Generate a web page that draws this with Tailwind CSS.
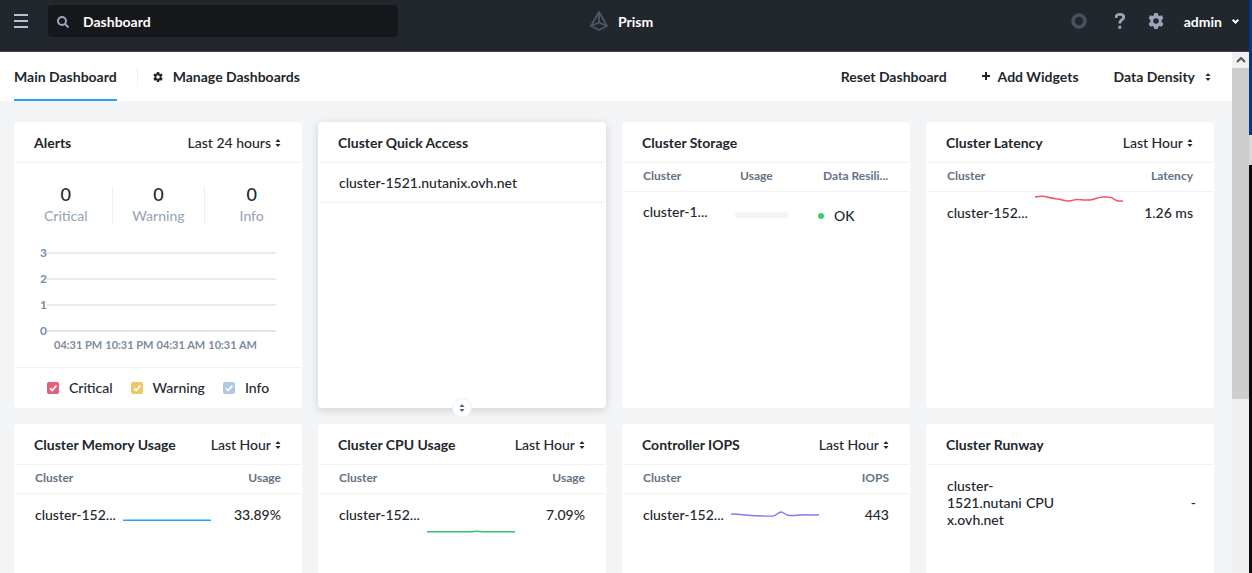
<!DOCTYPE html>
<html lang="en">
<head>
<meta charset="utf-8">
<title>Prism – Dashboard</title>
<script src="https://cdn.jsdelivr.net/npm/@tailwindcss/browser@4"></script>
</head>
<body class="flex h-screen overflow-hidden bg-[#f2f4f6] font-['Lato','Liberation_Sans',sans-serif] text-sm leading-5 font-medium text-[#22272e]">
<svg class="hidden">
  <symbol id="sort" viewBox="0 0 6 8"><path d="M3 0 5.500 3h-5zM3 8 .5 5h5z" fill="currentColor"/></symbol>
  <symbol id="tick" viewBox="0 0 12 12"><path d="m3 6.300 2.200 2.200L9.300 3.600" fill="none" stroke="#fff" stroke-width="1.800"/></symbol>
  <symbol id="gear" viewBox="0 0 16 16"><path fill="currentColor" fill-rule="evenodd" d="M6.200 0h3.600l.4 2.300 1.300.7 2.200-.8 1.800 3.100L13.700 6.800v2.400l1.800 1.500-1.800 3.100-2.200-.8-1.300.7L9.800 16H6.200l-.4-2.300-1.300-.7-2.200.8-1.800-3.100 1.800-1.500V6.800L.5 5.300l1.800-3.100 2.200.8 1.300-.7zM8 5.200a2.800 2.800 0 1 0 0 5.600 2.800 2.800 0 0 0 0-5.600z"/></symbol>
</svg>

<div class="flex min-w-0 flex-1 flex-col">
  <header class="flex h-[52px] shrink-0 items-center border-b border-[#3b4048] bg-[#22272e] pr-2.5 pb-2.5 pl-3.5">
    <div class="flex flex-1 items-center gap-5">
      <button aria-label="Menu" class="text-[#b8c0d0]"><svg class="block size-3.5" viewBox="0 0 14 14" fill="currentColor"><path d="M0 0h14v2H0zM0 6h14v2H0zM0 12h14v2H0z"/></svg></button>
      <label class="flex h-8 w-[350px] items-center gap-3.5 rounded bg-[#16181b] pt-0.5 pl-[9px] text-white">
        <svg class="size-3 shrink-0 text-[#9aa5b8]" viewBox="0 0 12 12" fill="none" stroke="currentColor" stroke-width="2"><circle cx="5" cy="5" r="4"/><path d="m8 8 3.500 3.500"/></svg>
        <input type="text" aria-label="Search" value="Dashboard" class="min-w-0 flex-1 bg-transparent font-bold outline-none">
      </label>
    </div>
    <a href="#" class="flex items-center gap-2.5 font-bold text-white">
      <svg class="h-5 w-[18px] text-[#4c5667]" viewBox="0 0 18 20" fill="none" stroke="currentColor" stroke-width="1.800" stroke-linejoin="round"><path d="M9 1 1 15l8 4 8-4zM9 1v10.500M1 15l8-3.500 8 3.500"/></svg>
      <span class="pt-0.5">Prism</span>
    </a>
    <div class="flex flex-1 items-center justify-end pl-2.5">
      <button aria-label="Tasks" class="mr-7 text-[#4a4f5b]"><svg class="block size-4" viewBox="0 0 16 16" fill="none" stroke="currentColor" stroke-width="3.600"><circle cx="8" cy="8" r="6"/></svg></button>
      <button aria-label="Help" class="mr-[23px] text-[#9aa5b8]"><svg class="block h-4 w-2.5" viewBox="0 0 10 16" fill="none" stroke="currentColor" stroke-width="2.800"><path d="M1 5V4C1.300 2.200 3 1.400 5 1.400c2.200 0 3.700 1 3.700 2.800C8.700 7 4.800 6.500 4.800 10.500M4.800 12.700v3"/></svg></button>
      <button aria-label="Settings" class="mr-5 text-[#9aa5b8]"><svg class="block size-4"><use href="#gear"/></svg></button>
      <button class="flex items-center gap-2.5 pt-0.5 font-bold text-white">admin <svg class="h-[5px] w-[7px]" viewBox="0 0 7 5" fill="none" stroke="currentColor" stroke-width="2"><path d="m.7.700 2.800 2.800L6.300.700"/></svg></button>
    </div>
  </header>

  <div class="flex min-h-0 flex-1">
    <div class="min-w-0 flex-1 overflow-hidden">
      <nav class="flex h-[49px] items-center bg-white pr-[21px] pl-3.5 font-bold">
        <a href="#" class="flex h-full items-center border-b-2 border-[#22a5f7] pt-0.5">Main Dashboard</a>
        <span class="ml-5 h-5 w-px bg-[#eff1f3]"></span>
        <a href="#" class="ml-[15px] flex items-center gap-2.5"><svg class="size-2.5"><use href="#gear"/></svg>Manage Dashboards</a>
        <button class="ml-auto">Reset Dashboard</button>
        <button class="ml-[35px] flex items-center gap-2"><svg class="size-2 -translate-y-px" viewBox="0 0 8 8" stroke="currentColor" stroke-width="2"><path d="M4 0v8M0 4h8"/></svg>Add Widgets</button>
        <button class="ml-[35px] flex items-center gap-2.5">Data Density<svg class="h-2 w-1.5"><use href="#sort"/></svg></button>
      </nav>

      <main class="grid grid-cols-4 auto-rows-[286px] gap-4 pt-[21px] pr-[18px] pl-3.5">
        <section class="flex flex-col rounded bg-white">
          <div class="mx-px flex h-[41px] items-center justify-between border-b border-[#f0f2f4] pt-0.5 pr-5 pl-[19px]">
            <h2 class="font-bold">Alerts</h2>
            <label class="flex items-center gap-1"><select aria-label="Alerts period" class="appearance-none field-sizing-content"><option>Last 24 hours</option></select><svg class="h-2 w-1.5"><use href="#sort"/></svg></label>
          </div>
          <dl class="mt-6 mr-1 ml-1.5 grid grid-cols-3 divide-x divide-[#eceff2] text-center">
            <div class="flex h-[37px] flex-col-reverse justify-end"><dt class="leading-5 text-[#9aa7ba]">Critical</dt><dd class="-mt-[5px] text-lg leading-6">0</dd></div>
            <div class="flex h-[37px] flex-col-reverse justify-end"><dt class="leading-5 text-[#9aa7ba]">Warning</dt><dd class="-mt-[5px] text-lg leading-6">0</dd></div>
            <div class="flex h-[37px] flex-col-reverse justify-end"><dt class="leading-5 text-[#9aa7ba]">Info</dt><dd class="-mt-[5px] text-lg leading-6">0</dd></div>
          </dl>
          <div class="mx-[26px] mt-4 text-xs font-bold text-[#7b8ca0]">
            <div class="flex h-[26px] items-center">3<i class="h-0.5 flex-1 bg-[#e8ebef]"></i></div>
            <div class="flex h-[26px] items-center">2<i class="h-0.5 flex-1 bg-[#e8ebef]"></i></div>
            <div class="flex h-[26px] items-center">1<i class="h-0.5 flex-1 bg-[#e8ebef]"></i></div>
            <div class="flex h-[26px] items-center">0<i class="h-0.5 flex-1 bg-[#dfe3e8]"></i></div>
            <div class="-mt-[7px] flex justify-between pr-[19px] pl-3.5 text-[11px] leading-4 whitespace-nowrap"><span>04:31 PM</span><span>10:31 PM</span><span>04:31 AM</span><span>10:31 AM</span></div>
          </div>
          <div class="mx-px mt-auto flex h-[41px] items-center gap-[18px] border-t border-[#f0f2f4] pl-8">
            <label class="flex items-center gap-2.5"><span class="relative size-3"><input type="checkbox" checked class="block size-3 appearance-none rounded-xs bg-[#e55f79]"><svg class="pointer-events-none absolute inset-0 size-3"><use href="#tick"/></svg></span>Critical</label>
            <label class="flex items-center gap-2.5"><span class="relative size-3"><input type="checkbox" checked class="block size-3 appearance-none rounded-xs bg-[#edc766]"><svg class="pointer-events-none absolute inset-0 size-3"><use href="#tick"/></svg></span>Warning</label>
            <label class="flex items-center gap-2.5"><span class="relative size-3"><input type="checkbox" checked class="block size-3 appearance-none rounded-xs bg-[#b0c8e3]"><svg class="pointer-events-none absolute inset-0 size-3"><use href="#tick"/></svg></span>Info</label>
          </div>
        </section>

        <section class="relative rounded bg-white shadow-[0_2px_8px_rgba(34,39,46,0.16)]">
          <div class="mx-px flex h-[41px] items-center border-b border-[#f0f2f4] px-[19px] pt-0.5"><h2 class="font-bold">Cluster Quick Access</h2></div>
          <a href="#" class="mx-px flex h-10 items-center border-b border-[#f0f2f4] px-5">cluster-1521.nutanix.ovh.net</a>
          <button aria-label="Resize widget" class="absolute -bottom-2.5 left-1/2 flex size-5 -translate-x-1/2 items-center justify-center rounded-full border border-[#eceff2] bg-white text-[#4f6275]"><svg class="h-2 w-1.5"><use href="#sort"/></svg></button>
        </section>

        <section class="rounded bg-white">
          <div class="mx-px flex h-[41px] items-center border-b border-[#f0f2f4] px-[19px] pt-0.5"><h2 class="font-bold">Cluster Storage</h2></div>
          <div class="mx-px">
            <table class="w-full table-fixed text-left">
              <thead><tr class="h-7 border-b border-[#f0f2f4] text-xs text-[#627386]"><th class="w-[112px] pb-0.5 pl-5 font-bold">Cluster</th><th class="w-[83px] pb-0.5 pl-[5px] font-bold">Usage</th><th class="pb-0.5 pl-[5px] font-bold">Data Resili...</th></tr></thead>
              <tbody><tr class="h-11"><td class="pb-0.5 pl-5">cluster-1...</td><td><div class="mt-1 h-1.5 w-[53px] rounded-full bg-[#f2f4f6]"></div></td><td><span class="flex items-center gap-2.5 pt-1.5"><i class="size-1.5 rounded-full bg-[#36d068]"></i>OK</span></td></tr></tbody>
            </table>
          </div>
        </section>

        <section class="rounded bg-white">
          <div class="mx-px flex h-[41px] items-center justify-between border-b border-[#f0f2f4] pt-0.5 pr-5 pl-[19px]">
            <h2 class="font-bold">Cluster Latency</h2>
            <label class="flex items-center gap-1"><select aria-label="Latency period" class="appearance-none field-sizing-content"><option>Last Hour</option></select><svg class="h-2 w-1.5"><use href="#sort"/></svg></label>
          </div>
          <div class="mx-px">
            <table class="w-full table-fixed">
              <thead><tr class="h-7 border-b border-[#f0f2f4] text-xs text-[#627386]"><th class="w-[108px] pb-0.5 pl-5 text-left font-bold">Cluster</th><th class="w-[88px]"></th><th class="pr-5 pb-0.5 text-right font-bold">Latency</th></tr></thead>
              <tbody><tr class="h-11"><td class="pb-0.5 pl-5">cluster-152...</td><td><svg class="block h-11 w-[88px]" viewBox="0 0 88 44" fill="none" stroke="#f0555f" stroke-width="1.500"><path d="M0 5c5-1 9-1 12 0 4 1 6 1.300 10 2 4 0 7 2 12 2 4 0 5-2 9-1.500 5 .5 7 .5 12 .5 5-.5 8-3 13-3 5 0 8-.5 10 1.500 3 2 4 3 10 2.500"/></svg></td><td class="pr-5 pb-0.5 text-right">1.26 ms</td></tr></tbody>
            </table>
          </div>
        </section>

        <section class="rounded bg-white">
          <div class="mx-px flex h-[41px] items-center justify-between border-b border-[#f0f2f4] pt-0.5 pr-5 pl-[19px]">
            <h2 class="font-bold">Cluster Memory Usage</h2>
            <label class="flex items-center gap-1"><select aria-label="Memory usage period" class="appearance-none field-sizing-content"><option>Last Hour</option></select><svg class="h-2 w-1.5"><use href="#sort"/></svg></label>
          </div>
          <div class="mx-px">
            <table class="w-full table-fixed">
              <thead><tr class="h-7 border-b border-[#f0f2f4] text-xs text-[#627386]"><th class="w-[108px] pb-0.5 pl-5 text-left font-bold">Cluster</th><th class="w-[88px]"></th><th class="pr-5 pb-0.5 text-right font-bold">Usage</th></tr></thead>
              <tbody><tr class="h-11"><td class="pb-0.5 pl-5">cluster-152...</td><td><svg class="block h-11 w-[88px]" viewBox="0 0 88 44" fill="none" stroke="#22a5f7" stroke-width="1.500"><path d="M0 26.300h88"/></svg></td><td class="pr-5 pb-0.5 text-right">33.89%</td></tr></tbody>
            </table>
          </div>
        </section>

        <section class="rounded bg-white">
          <div class="mx-px flex h-[41px] items-center justify-between border-b border-[#f0f2f4] pt-0.5 pr-5 pl-[19px]">
            <h2 class="font-bold">Cluster CPU Usage</h2>
            <label class="flex items-center gap-1"><select aria-label="CPU usage period" class="appearance-none field-sizing-content"><option>Last Hour</option></select><svg class="h-2 w-1.5"><use href="#sort"/></svg></label>
          </div>
          <div class="mx-px">
            <table class="w-full table-fixed">
              <thead><tr class="h-7 border-b border-[#f0f2f4] text-xs text-[#627386]"><th class="w-[108px] pb-0.5 pl-5 text-left font-bold">Cluster</th><th class="w-[88px]"></th><th class="pr-5 pb-0.5 text-right font-bold">Usage</th></tr></thead>
              <tbody><tr class="h-11"><td class="pb-0.5 pl-5">cluster-152...</td><td><svg class="block h-11 w-[88px]" viewBox="0 0 88 44" fill="none" stroke="#36c463" stroke-width="1.500"><path d="M0 37.800h44q6-1 12 0h32"/></svg></td><td class="pr-5 pb-0.5 text-right">7.09%</td></tr></tbody>
            </table>
          </div>
        </section>

        <section class="rounded bg-white">
          <div class="mx-px flex h-[41px] items-center justify-between border-b border-[#f0f2f4] pt-0.5 pr-5 pl-[19px]">
            <h2 class="font-bold">Controller IOPS</h2>
            <label class="flex items-center gap-1"><select aria-label="IOPS period" class="appearance-none field-sizing-content"><option>Last Hour</option></select><svg class="h-2 w-1.5"><use href="#sort"/></svg></label>
          </div>
          <div class="mx-px">
            <table class="w-full table-fixed">
              <thead><tr class="h-7 border-b border-[#f0f2f4] text-xs text-[#627386]"><th class="w-[108px] pb-0.5 pl-5 text-left font-bold">Cluster</th><th class="w-[88px]"></th><th class="pr-5 pb-0.5 text-right font-bold">IOPS</th></tr></thead>
              <tbody><tr class="h-11"><td class="pb-0.5 pl-5">cluster-152...</td><td><svg class="block h-11 w-[88px]" viewBox="0 0 88 44" fill="none" stroke="#8b78ea" stroke-width="1.500"><path d="M0 20q6 0 14 1 14 1.500 28 1c4-.5 5-4 8-4s4 3 8 3.500c6 .3 10-.7 16-.7 6 0 8 .7 14 0"/></svg></td><td class="pr-5 pb-0.5 text-right">443</td></tr></tbody>
            </table>
          </div>
        </section>

        <section class="rounded bg-white">
          <div class="mx-px flex h-[41px] items-center border-b border-[#f0f2f4] px-[19px] pt-0.5"><h2 class="font-bold">Cluster Runway</h2></div>
          <div class="flex items-center gap-3 pt-3 pr-[18px] pl-[21px] leading-[17px]">
            <span class="w-[67px] whitespace-nowrap">cluster-<br>1521.nutani<br>x.ovh.net</span>
            <span>CPU</span>
            <span class="ml-auto">-</span>
          </div>
        </section>
      </main>
    </div>

    <!-- scroll track -->
    <div class="flex w-[17px] flex-col bg-[#f0f0f0]">
      <button aria-label="Scroll up" class="flex h-4 items-center justify-center text-[#555]"><svg class="h-1.5 w-2.5" viewBox="0 0 10 6" fill="none" stroke="currentColor" stroke-width="2"><path d="m1 5 4-4 4 4"/></svg></button>
      <div class="h-[331px] bg-[#cdcdcd]"></div>
    </div>
  </div>
</div>

<!-- desktop edge -->
<div class="flex w-[3px] flex-col bg-[#0c0c0f]">
  <div class="h-[135px] bg-[#05358c]"></div>
  <div class="h-[30px] bg-[#d8d8d8]"></div>
</div>
</body>
</html>
